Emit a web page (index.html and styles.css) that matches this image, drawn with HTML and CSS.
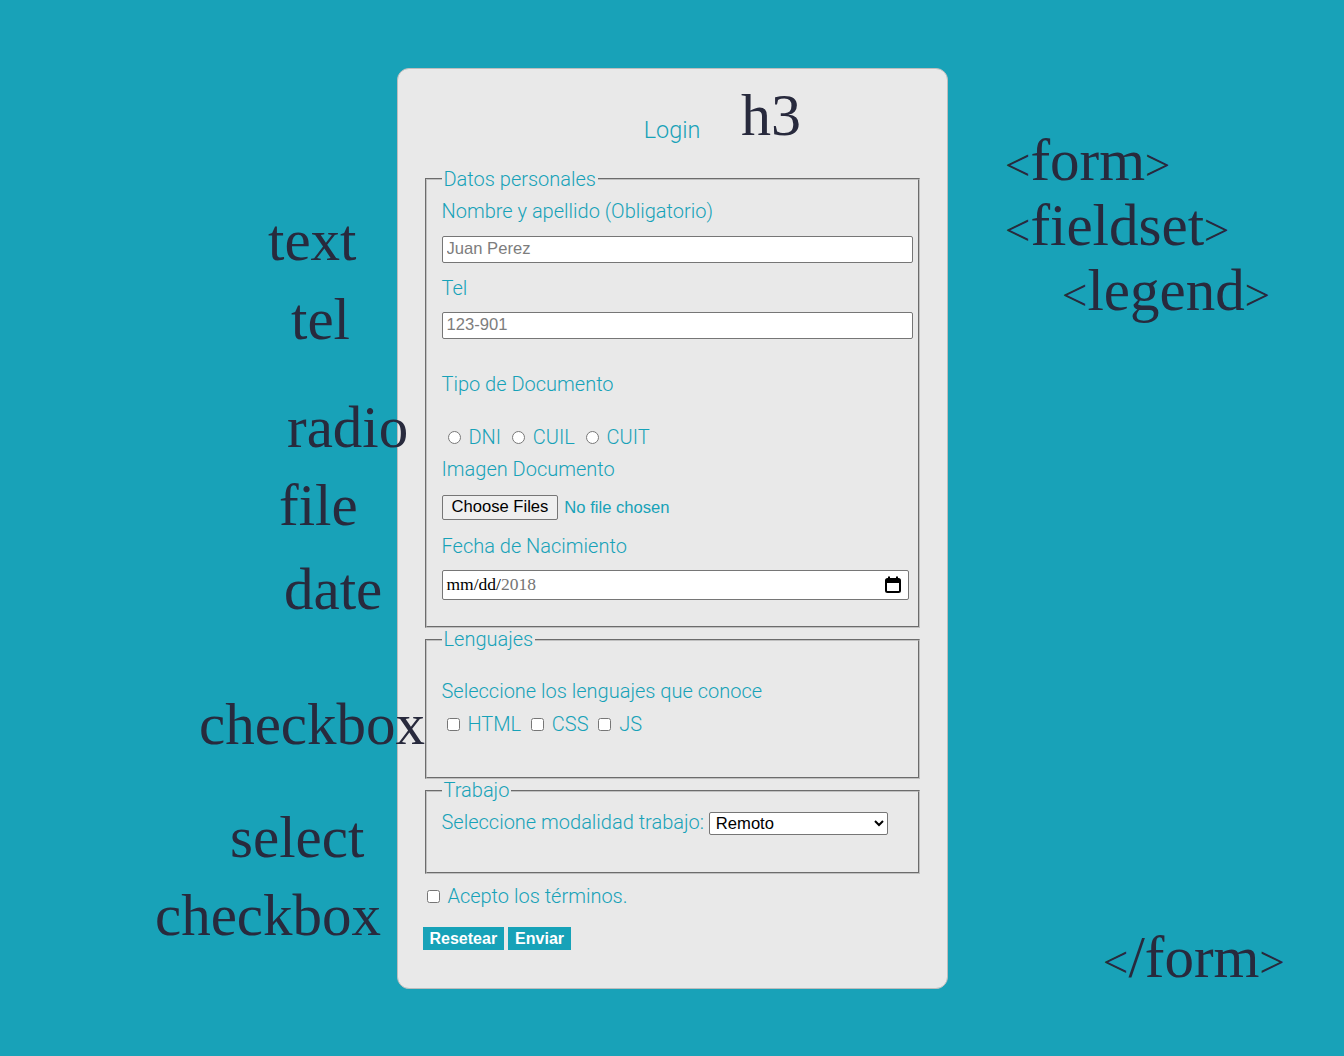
FILE: index.html
```html
<!DOCTYPE html>
<html lang="es">
<head>
<meta charset="utf-8">
<title>Login</title>
<link rel="stylesheet" href="styles.css">
</head>
<body>
<main class="stage">
  <form class="card" action="#">
    <h3 class="title">Login</h3>

    <fieldset class="group group-personal">
      <legend class="group-legend">Datos personales</legend>
      <label class="field-label first-label" for="nombre">Nombre y apellido (Obligatorio)</label>
      <input class="text-input gap-sm" id="nombre" type="text" placeholder="Juan Perez">
      <label class="field-label gap-md" for="tel">Tel</label>
      <input class="text-input gap-sm" id="tel" type="tel" placeholder="123-901">

      <p class="field-label gap-xl">Tipo de Documento</p>
      <div class="choice-row gap-radio">
        <input class="radio" type="radio" id="dni" name="doc"> <label for="dni">DNI</label>
        <input class="radio" type="radio" id="cuil" name="doc"> <label for="cuil">CUIL</label>
        <input class="radio" type="radio" id="cuit" name="doc"> <label for="cuit">CUIT</label>
      </div>

      <label class="field-label gap-xs" for="imagen">Imagen Documento</label>
      <input class="file-input gap-file" id="imagen" type="file" multiple>

      <label class="field-label gap-file">Fecha de Nacimiento</label>
      <div class="date-input gap-sm">
        <span class="date-fill">mm/dd/</span><span class="date-year">2018</span>
        <svg class="date-icon" width="16" height="17" viewBox="0 0 16 17" aria-hidden="true">
          <rect x="1" y="3" width="14" height="13" rx="1.5" fill="none" stroke="#000" stroke-width="2"/>
          <rect x="1" y="3" width="14" height="4" fill="#000"/>
          <rect x="3" y="0.5" width="2" height="3" fill="#000"/>
          <rect x="11" y="0.5" width="2" height="3" fill="#000"/>
        </svg>
      </div>
    </fieldset>

    <fieldset class="group group-lang">
      <legend class="group-legend">Lenguajes</legend>
      <p class="field-label lang-intro">Seleccione los lenguajes que conoce</p>
      <div class="choice-row lang-row">
        <input class="check" type="checkbox" id="html"> <label for="html">HTML</label>
        <input class="check" type="checkbox" id="css"> <label for="css">CSS</label>
        <input class="check" type="checkbox" id="js"> <label for="js">JS</label>
      </div>
    </fieldset>

    <fieldset class="group group-work">
      <legend class="group-legend">Trabajo</legend>
      <div class="choice-row work-row">
        <label for="modalidad">Seleccione modalidad trabajo:</label>
        <select class="select" id="modalidad">
          <option>Remoto</option>
          <option>Presencial</option>
          <option>Híbrido</option>
        </select>
      </div>
    </fieldset>

    <div class="choice-row terms-row">
      <input class="check check-terms" type="checkbox" id="terminos"> <label for="terminos">Acepto los términos.</label>
    </div>

    <div class="actions">
      <button class="btn" type="reset">Resetear</button>
      <button class="btn" type="submit">Enviar</button>
    </div>
  </form>

  <span class="note note-h3">h3</span>
  <span class="note note-text">text</span>
  <span class="note note-tel">tel</span>
  <span class="note note-radio">radio</span>
  <span class="note note-file">file</span>
  <span class="note note-date">date</span>
  <span class="note note-check1">checkbox</span>
  <span class="note note-select">select</span>
  <span class="note note-check2">checkbox</span>
  <span class="note note-form"><span class="br">&lt;</span>form<span class="br">&gt;</span></span>
  <span class="note note-fieldset"><span class="br">&lt;</span>fieldset<span class="br">&gt;</span></span>
  <span class="note note-legend"><span class="br">&lt;</span>legend<span class="br">&gt;</span></span>
  <span class="note note-endform"><span class="br">&lt;</span>/form<span class="br">&gt;</span></span>
</main>
</body>
</html>
```

FILE: styles.css
```css
html, body {
  margin: 0;
  padding: 0;
}

body {
  background: #18a2b8;
  font-family: Roboto, "Liberation Sans", sans-serif;
}

.stage {
  position: relative;
  box-sizing: border-box;
  min-height: 1056px;
  padding-top: 68px;
}

/* ---------- form card ---------- */
.card {
  box-sizing: border-box;
  width: 551px;
  margin: 0 auto;
  padding: 25px;
  background: #e9e9e9;
  border: 1px solid #bdbdbd;
  border-radius: 12px;
  color: #17a2b8;
  font-size: 20px;
  font-weight: 300;
}

.title {
  margin: 23.4px 0;
  font-size: 1.17em;
  font-weight: 300;
  line-height: 27px;
  text-align: center;
}

.group {
  margin: 0 2px;
  padding: 7px 15px 12.5px;
  border: 2px groove rgb(192, 192, 192);
}

.group-legend {
  padding: 0 2px;
  line-height: 23px;
}

.field-label {
  display: block;
  margin: 0;
  line-height: 24px;
}

.first-label { margin-top: 1px; }

.gap-xs { margin-top: 8px; }
.gap-sm { margin-top: 12px; }
.gap-md { margin-top: 13px; }
.gap-file { margin-top: 14px; }
.gap-xl { margin-top: 33px; }
.gap-radio { margin-top: 29px; }

#nombre { margin-top: 13px; }

.text-input {
  display: block;
  box-sizing: border-box;
  width: calc(100% + 10px);
  height: 27px;
  padding: 0 4px;
  border: 1px solid #767676;
  border-radius: 2px;
  background: #fff;
  font-family: "Liberation Sans", Arial, sans-serif;
  font-size: 16.6px;
  color: #000;
}

.text-input::placeholder {
  color: #7d7d7d;
}

.choice-row {
  line-height: 24px;
}

.radio {
  width: 13px;
  height: 13px;
  margin: 3px 3px 0 6px;
}

.check {
  width: 13px;
  height: 13px;
  margin: 3px 3px 2px 5px;
}

.check-terms {
  margin-left: 4px;
}

.file-input {
  display: block;
  height: 25px;
  font-family: "Liberation Sans", Arial, sans-serif;
  font-size: 16.6px;
  color: #17a2b8;
}

.file-input::file-selector-button {
  height: 25px;
  margin: 0 6px 0 0;
  padding: 0 9px;
  border: 1px solid #767676;
  border-radius: 2px;
  background: #efefef;
  color: #000;
  font-family: "Liberation Sans", Arial, sans-serif;
  font-size: 16.6px;
}

.date-input {
  display: flex;
  align-items: center;
  box-sizing: border-box;
  width: calc(100% + 6px);
  height: 30px;
  margin-bottom: 14px;
  padding: 0 7px 0 4px;
  border: 1px solid #767676;
  border-radius: 2px;
  background: #fff;
  font-family: "Liberation Serif", "Times New Roman", serif;
  font-size: 17.5px;
  font-weight: 400;
}

.date-fill { color: #000; }
.date-year { color: #757575; }

.date-icon {
  margin-left: auto;
}

.lang-intro { margin-top: 21px; }

.lang-row {
  margin-top: 9px;
  margin-bottom: 28.5px;
}

.work-row {
  margin-top: 1px;
  margin-bottom: 24.5px;
}

.select {
  box-sizing: border-box;
  width: 179px;
  height: 23px;
  padding: 0 2px;
  border: 1px solid #767676;
  border-radius: 2px;
  background: #fff;
  color: #000;
  font-family: "Liberation Sans", Arial, sans-serif;
  font-size: 16.6px;
  vertical-align: 0;
}

.terms-row {
  margin-top: 10px;
}

.actions {
  display: flex;
  gap: 4px;
  margin-top: 19px;
  margin-bottom: 13px;
}

.btn {
  height: 23px;
  padding: 0 7px;
  border: 0;
  background: #17a2b8;
  color: #fff;
  font-family: "Liberation Sans", Arial, sans-serif;
  font-size: 16px;
  font-weight: 700;
}

/* ---------- annotations ---------- */
.note {
  position: absolute;
  font-family: "Liberation Serif", "Times New Roman", serif;
  font-size: 59px;
  line-height: 59px;
  color: #282a3d;
  white-space: nowrap;
}

.note .br {
  font-size: 45px;
}

.note-h3 { left: 741px; top: 85px; font-size: 60px; line-height: 60px; }
.note-text { left: 268px; top: 211px; }
.note-tel { left: 291px; top: 290px; }
.note-radio { left: 287px; top: 398px; }
.note-file { left: 279px; top: 476px; }
.note-date { left: 284px; top: 560px; }
.note-check1 { left: 199px; top: 695px; }
.note-select { left: 230px; top: 808px; }
.note-check2 { left: 155px; top: 886px; }
.note-form { left: 1005px; top: 131px; }
.note-fieldset { left: 1005px; top: 196px; }
.note-legend { left: 1062px; top: 261px; }
.note-endform { left: 1103px; top: 928px; }
```
